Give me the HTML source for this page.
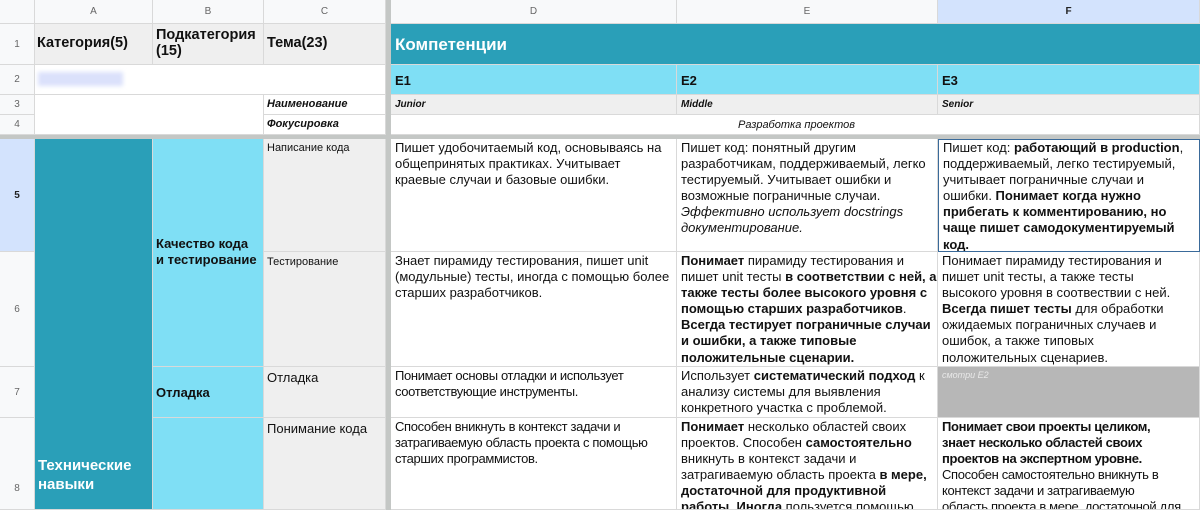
<!DOCTYPE html>
<html><head><meta charset="utf-8"><style>
*{margin:0;padding:0;box-sizing:border-box}
body{width:1200px;height:510px;overflow:hidden;background:#fff;font-family:"Liberation Sans","DejaVu Sans",sans-serif;color:#111;position:relative}
.c{position:absolute;overflow:hidden;border-right:1px solid #d9d9d9;border-bottom:1px solid #d9d9d9}
.h{background:#f8f9fa;color:#666;font-size:10px;display:flex;align-items:center;justify-content:center}
.t{font-size:13px;line-height:16.1px;padding:1px 4px;white-space:nowrap}
b{font-weight:bold}
.cn{letter-spacing:-0.35px}
</style></head><body>
<div class="c h" style="left:0;top:0;width:35px;height:24px"></div>
<div class="c h" style="left:35px;top:0;width:118px;height:24px">A</div>
<div class="c h" style="left:153px;top:0;width:111px;height:24px">B</div>
<div class="c h" style="left:264px;top:0;width:122px;height:24px">C</div>
<div class="c h" style="left:391px;top:0;width:286px;height:24px">D</div>
<div class="c h" style="left:677px;top:0;width:261px;height:24px">E</div>
<div class="c h" style="left:938px;top:0;width:262px;height:24px;background:#d3e3fd;color:#222;font-weight:bold">F</div>
<div class="c h" style="left:0;top:24px;width:35px;height:41px">1</div>
<div class="c h" style="left:0;top:65px;width:35px;height:30px">2</div>
<div class="c h" style="left:0;top:95px;width:35px;height:20px">3</div>
<div class="c h" style="left:0;top:115px;width:35px;height:20px">4</div>
<div class="c h" style="left:0;top:139px;width:35px;height:113px;background:#d3e3fd;color:#222;font-weight:bold">5</div>
<div class="c h" style="left:0;top:252px;width:35px;height:115px">6</div>
<div class="c h" style="left:0;top:367px;width:35px;height:51px">7</div>
<div class="c h" style="left:0;top:418px;width:35px;height:92px;padding-top:50px">8</div>
<div style="position:absolute;left:386px;top:0;width:5px;height:510px;background:#c4c7c5"></div>
<div style="position:absolute;left:0;top:135px;width:1200px;height:4px;background:#c4c7c5"></div>
<div class="c" style="left:35px;top:24px;width:118px;height:41px;background:#efefef;font-weight:bold;font-size:14.5px;padding:11px 2px">Категория(5)</div>
<div class="c" style="left:153px;top:24px;width:111px;height:41px;background:#efefef;font-weight:bold;font-size:14.5px;line-height:16px;padding:3px 3px">Подкатегория<br>(15)</div>
<div class="c" style="left:264px;top:24px;width:122px;height:41px;background:#efefef;font-weight:bold;font-size:14.5px;padding:11px 3px">Тема(23)</div>
<div class="c" style="left:391px;top:24px;width:809px;height:41px;background:#2a9fb8;color:#fff;font-weight:bold;font-size:17px;padding:11px 4px;border-right:none">Компетенции</div>
<div class="c" style="left:35px;top:65px;width:351px;height:30px;background:#fff"><div style="position:absolute;left:3px;top:7px;width:85px;height:14px;background:#dbe1fb;filter:blur(2px)"></div></div>
<div class="c" style="left:391px;top:65px;width:286px;height:30px;background:#7fdff5;font-weight:bold;font-size:13px;padding:8px 4px">E1</div>
<div class="c" style="left:677px;top:65px;width:261px;height:30px;background:#7fdff5;font-weight:bold;font-size:13px;padding:8px 4px">E2</div>
<div class="c" style="left:938px;top:65px;width:262px;height:30px;background:#7fdff5;font-weight:bold;font-size:13px;padding:8px 4px">E3</div>
<div class="c" style="left:35px;top:95px;width:229px;height:40px;background:#fff"></div>
<div class="c" style="left:264px;top:95px;width:122px;height:20px;font-style:italic;font-weight:bold;font-size:11px;padding:3px 3px">Наименование</div>
<div class="c" style="left:264px;top:115px;width:122px;height:20px;font-style:italic;font-weight:bold;font-size:11px;padding:3px 3px">Фокусировка</div>
<div class="c" style="left:391px;top:95px;width:286px;height:20px;background:#efefef;font-style:italic;font-weight:bold;font-size:10px;padding:4px 4px">Junior</div>
<div class="c" style="left:677px;top:95px;width:261px;height:20px;background:#efefef;font-style:italic;font-weight:bold;font-size:10px;padding:4px 4px">Middle</div>
<div class="c" style="left:938px;top:95px;width:262px;height:20px;background:#efefef;font-style:italic;font-weight:bold;font-size:10px;padding:4px 4px">Senior</div>
<div class="c" style="left:391px;top:115px;width:809px;height:20px;font-style:italic;font-size:11px;padding:4px 0 0 347px">Разработка проектов</div>
<div class="c" style="left:35px;top:139px;width:118px;height:371px;background:#2a9fb8;color:#fff;font-weight:bold;font-size:15px;line-height:19px;padding:317px 3px 0">Технические<br>навыки</div>
<div class="c" style="left:153px;top:139px;width:111px;height:228px;background:#7fdff5;font-weight:bold;font-size:13px;line-height:16px;padding:97px 3px 0">Качество кода<br>и тестирование</div>
<div class="c" style="left:153px;top:367px;width:111px;height:51px;background:#7fdff5;font-weight:bold;font-size:13px;padding:18px 3px 0">Отладка</div>
<div class="c" style="left:153px;top:418px;width:111px;height:92px;background:#7fdff5"></div>
<div class="c" style="left:264px;top:139px;width:122px;height:113px;background:#efefef;font-size:11px;padding:3px 3px">Написание кода</div>
<div class="c" style="left:264px;top:252px;width:122px;height:115px;background:#efefef;font-size:11px;padding:4px 3px">Тестирование</div>
<div class="c" style="left:264px;top:367px;width:122px;height:51px;background:#efefef;font-size:13px;padding:3px 3px">Отладка</div>
<div class="c" style="left:264px;top:418px;width:122px;height:92px;background:#efefef;font-size:13px;padding:3px 3px">Понимание кода</div>
<div class="c t" style="left:391px;top:139px;width:286px;height:113px">Пишет удобочитаемый код, основываясь на<br>общепринятых практиках. Учитывает<br>краевые случаи и базовые ошибки.</div>
<div class="c t" style="left:677px;top:139px;width:261px;height:113px">Пишет код: понятный другим<br>разработчикам, поддерживаемый, легко<br>тестируемый. Учитывает ошибки и<br>возможные пограничные случаи.<br><i>Эффективно использует docstrings<br>документирование.</i></div>
<div class="c t" style="left:938px;top:139px;width:262px;height:113px;border:1.5px solid #3a6a9a;padding-top:0">Пишет код: <b>работающий в production</b>,<br>поддерживаемый, легко тестируемый,<br>учитывает пограничные случаи и<br>ошибки. <b>Понимает когда нужно<br>прибегать к комментированию, но<br>чаще пишет самодокументируемый<br>код.</b></div>
<div class="c t" style="left:391px;top:252px;width:286px;height:115px">Знает пирамиду тестирования, пишет unit<br>(модульные) тесты, иногда с помощью более<br>старших разработчиков.</div>
<div class="c t" style="left:677px;top:252px;width:261px;height:115px"><b>Понимает</b> пирамиду тестирования и<br>пишет unit тесты <b>в соответствии с ней, а<br>также тесты более высокого уровня с<br>помощью старших разработчиков</b>.<br><b>Всегда тестирует пограничные случаи<br>и ошибки, а также типовые<br>положительные сценарии.</b></div>
<div class="c t" style="left:938px;top:252px;width:262px;height:115px">Понимает пирамиду тестирования и<br>пишет unit тесты, а также тесты<br>высокого уровня в соотвествии с ней.<br><b>Всегда пишет тесты</b> для обработки<br>ожидаемых пограничных случаев и<br>ошибок, а также типовых<br>положительных сценариев.</div>
<div class="c t cn" style="left:391px;top:367px;width:286px;height:51px">Понимает основы отладки и использует<br>соответствующие инструменты.</div>
<div class="c t" style="left:677px;top:367px;width:261px;height:51px">Использует <b>систематический подход</b> к<br>анализу системы для выявления<br>конкретного участка с проблемой.</div>
<div class="c" style="left:938px;top:367px;width:262px;height:51px;background:#b7b7b7;color:#e8e8e8;font-style:italic;font-size:9px;padding:3px 4px">смотри E2</div>
<div class="c t cn" style="left:391px;top:418px;width:286px;height:92px">Способен вникнуть в контекст задачи и<br>затрагиваемую область проекта с помощью<br>старших программистов.</div>
<div class="c t" style="left:677px;top:418px;width:261px;height:92px"><b>Понимает</b> несколько областей своих<br>проектов. Способен <b>самостоятельно</b><br>вникнуть в контекст задачи и<br>затрагиваемую область проекта <b>в мере,<br>достаточной для продуктивной<br>работы. Иногда</b> пользуется помощью</div>
<div class="c t cn" style="left:938px;top:418px;width:262px;height:92px"><b>Понимает свои проекты целиком,<br>знает несколько областей своих<br>проектов на экспертном уровне.</b><br>Способен самостоятельно вникнуть в<br>контекст задачи и затрагиваемую<br>область проекта в мере, достаточной для</div>
</body></html>
